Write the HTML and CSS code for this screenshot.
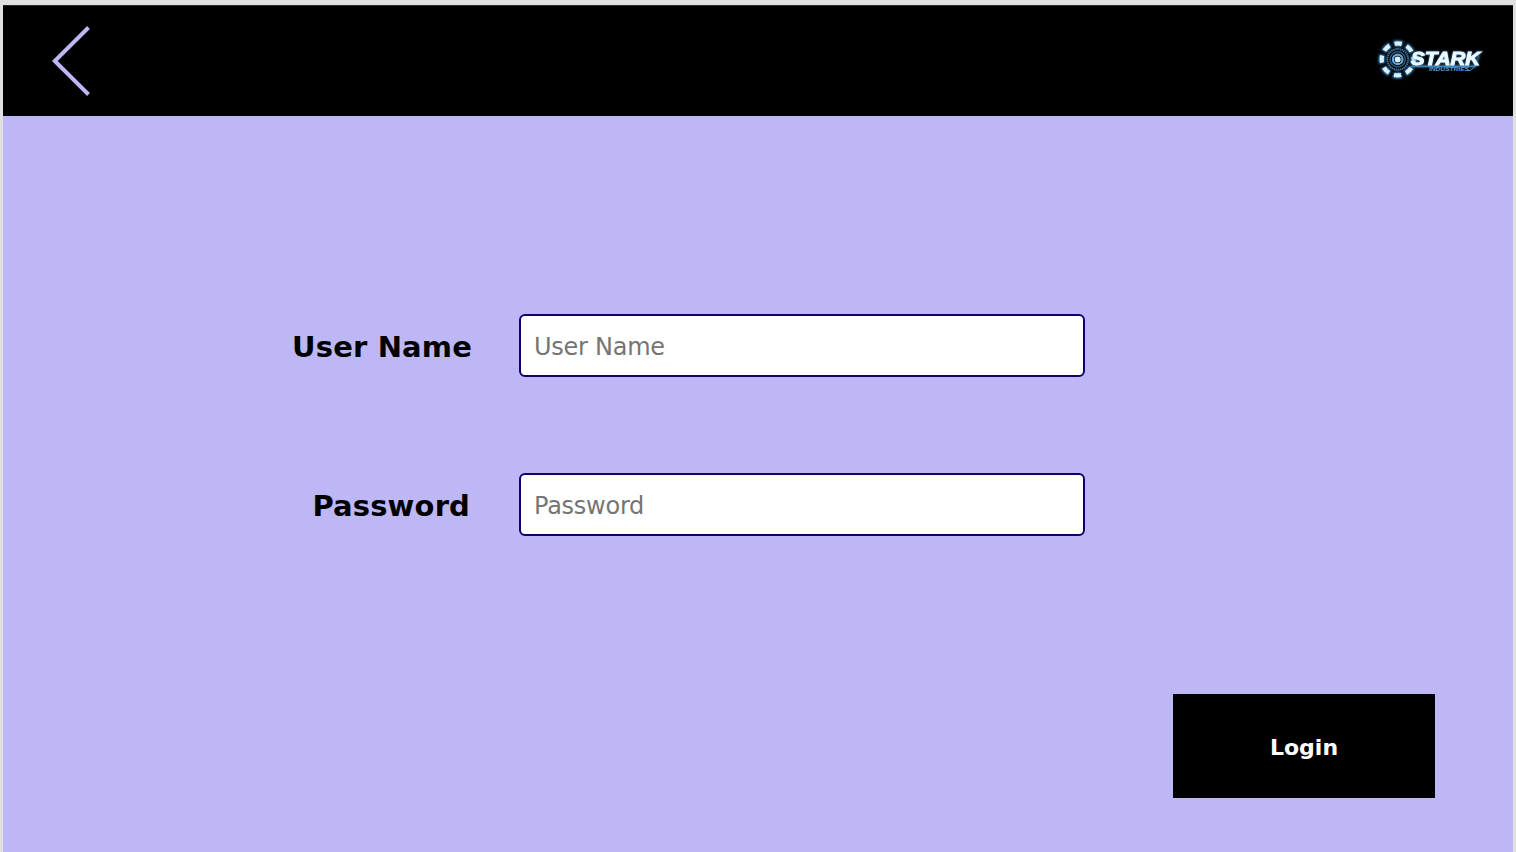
FILE: index.html
```html
<!DOCTYPE html>
<html lang="en">
<head>
<meta charset="utf-8">
<title>Login</title>
<link rel="stylesheet" href="styles.css">
</head>
<body>
<div class="page">
  <header class="header">
    <a class="back" href="#" aria-label="Back">
      <svg width="42" height="72" viewBox="0 0 42 72"><path d="M38.500 2.500 4.800 36 38.500 69.500" fill="none" stroke="#bdb7f5" stroke-width="4"/></svg>
    </a>
    <svg class="logo" width="108" height="44" viewBox="0 0 108 44" role="img" aria-label="Stark Industries">
      <defs><filter id="glow" x="-20%" y="-20%" width="140%" height="140%"><feGaussianBlur stdDeviation="1"/></filter></defs>
      <g fill="none">
        <circle cx="21.700" cy="21.400" r="16" stroke="#397fb9" stroke-width="6.500" stroke-dasharray="8.900 3.666" stroke-dashoffset="4.450" filter="url(#glow)"/>
        <circle cx="21.700" cy="21.400" r="16" stroke="#d9f1ff" stroke-width="4.200" stroke-dasharray="7.200 5.366" stroke-dashoffset="3.600"/>
        <circle cx="21.700" cy="21.400" r="10.400" stroke="#3f6f96" stroke-width="2" stroke-dasharray="1.600 .5"/>
        <circle cx="21.700" cy="21.400" r="7.600" stroke="#2c5b7e" stroke-width="1.600"/>
        <circle cx="21.700" cy="21.400" r="4.800" stroke="#62aae2" stroke-width="2.200"/>
      </g>
      <circle cx="21.700" cy="21.400" r="3" fill="#d8f2ff"/>
      <path d="M35 28.300H99L103 17" fill="none" stroke="#3f86c0" stroke-width="2" filter="url(#glow)"/>
      <path d="M35 28.300H99.500L94 32.500H91" fill="none" stroke="#4d91c8" stroke-width="1"/>
      <text class="logo-name" x="35" y="27" textLength="69" lengthAdjust="spacingAndGlyphs">STARK</text>
      <text class="logo-sub" x="53" y="32.500" textLength="40" lengthAdjust="spacingAndGlyphs">INDUSTRIES</text>
    </svg>
  </header>
  <main class="content">
    <form class="form">
      <label class="label" for="user">User Name</label>
      <input class="input" id="user" type="text" placeholder="User Name">
      <label class="label label-password" for="password">Password</label>
      <input class="input" id="password" type="password" placeholder="Password">
      <button class="login" type="button">Login</button>
    </form>
  </main>
</div>
</body>
</html>
```
FILE: styles.css
```css
* { box-sizing: border-box; }
body {
  margin: 0;
  padding: 5px 3px 0;
  background: #e0e0e0;
  font-family: Verdana, "DejaVu Sans", sans-serif;
  overflow: hidden;
}
.page { height: 847px; background: #bdb7f5; }
.header {
  display: flex;
  justify-content: space-between;
  align-items: center;
  height: 111px;
  padding: 0 29px 0 47px;
  background: #000;
  border-top: 1px solid #25292b;
}
.back { display: flex; }
.logo { display: block; margin-top: -3px; }
.logo-name {
  font: italic bold 18px "Liberation Sans", sans-serif;
  fill: #eefaff;
  stroke: #eefaff;
  stroke-width: .9px;
  filter: drop-shadow(0 0 1px #438fcc);
}
.logo-sub {
  font: italic bold 5px "Liberation Sans", sans-serif;
  fill: #5a9fd5;
}
.form {
  display: grid;
  grid-template-columns: 469px 566px;
  grid-template-rows: 63px 63px 104px;
  gap: 96px 47px;
  align-items: center;
  padding-top: 198px;
}
.label {
  justify-self: end;
  padding-top: 2px;
  font-size: 29px;
  font-weight: bold;
  letter-spacing: .15px;
  line-height: 36px;
  white-space: nowrap;
}
.label-password { margin-right: 2px; }
.input {
  width: 566px;
  height: 63px;
  padding: 2px 13px 0;
  border: 2px solid #13006b;
  border-radius: 6px;
  background: #fff;
  font: 24px Verdana, "DejaVu Sans", sans-serif;
  letter-spacing: -.25px;
}
.input::placeholder { color: #757575; opacity: 1; }
.login {
  grid-column: 1 / -1;
  width: 262px;
  height: 104px;
  margin: 124px 0 0 1170px;
  padding: 2px 0 0;
  border: 0;
  background: #000;
  color: #fff;
  font: bold 22px Verdana, "DejaVu Sans", sans-serif;
}
```
